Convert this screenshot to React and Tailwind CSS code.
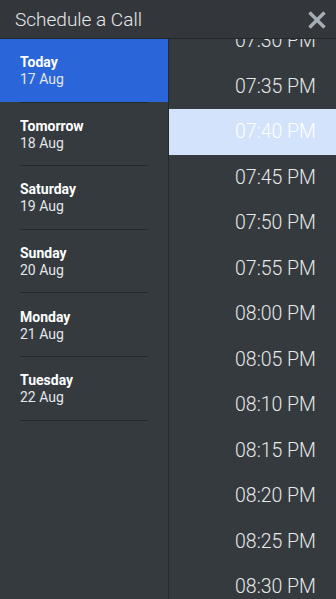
import React from "react";

const days = [
  { name: "Today", date: "17 Aug" },
  { name: "Tomorrow", date: "18 Aug" },
  { name: "Saturday", date: "19 Aug" },
  { name: "Sunday", date: "20 Aug" },
  { name: "Monday", date: "21 Aug" },
  { name: "Tuesday", date: "22 Aug" },
];

const times = [
  "07:30 PM", "07:35 PM", "07:40 PM", "07:45 PM", "07:50 PM", "07:55 PM", "08:00 PM",
  "08:05 PM", "08:10 PM", "08:15 PM", "08:20 PM", "08:25 PM", "08:30 PM", "08:35 PM",
];

const App = () => {
  const selectedDay = 0;
  const selectedTime = 2;

  return (
    <div className="w-[336px] h-[599px] flex flex-col bg-[#353a3e] overflow-hidden" style={{ fontFamily: "Roboto, 'Liberation Sans', sans-serif" }}>
      {/* header */}
      <div className="h-[39px] shrink-0 flex items-center justify-between pl-[15px] pr-[9px] pt-[2px] bg-[#33373b] border-b border-[#25282b]">
        <span className="text-[19px] font-light text-[#e6e8ea]">Schedule a Call</span>
        <svg width="20" height="20" viewBox="0 0 20 20" className="-mt-[1px]">
          <path d="M2.5 2.5 L17.5 17.5 M17.5 2.5 L2.5 17.5" stroke="#a7aeb5" strokeWidth="3.4" strokeLinecap="butt" />
        </svg>
      </div>

      <div className="flex flex-1 min-h-0">
        {/* days */}
        <div className="w-[169px] shrink-0 border-r border-[#272a2d] flex flex-col">
          {days.map((d, i) => (
            <React.Fragment key={d.name}>
              <div className={`h-[62.6px] shrink-0 flex flex-col justify-center pl-[20px] pt-[2px] ${i === selectedDay ? "bg-[#2a66d9]" : ""}`}>
                <span className="text-[14px] font-bold leading-[17px] text-white">{d.name}</span>
                <span className="text-[14px] leading-[17px] text-[#e3e6ea]">{d.date}</span>
              </div>
              <div className="h-px mx-[20px] bg-[#25282b] shrink-0" />
            </React.Fragment>
          ))}
        </div>

        {/* times */}
        <div className="flex-1 overflow-hidden">
          <div className="-mt-[21px] flex flex-col">
            {times.map((t, i) => (
              <div key={t} className={`h-[45.5px] shrink-0 flex items-center justify-end pr-[20px] text-[19.5px] font-light ${i === selectedTime ? "bg-[#d3e3fc] text-white" : "text-[#e6e8ea]"}`}>
                {t}
              </div>
            ))}
          </div>
        </div>
      </div>
    </div>
  );
};

export default App;
